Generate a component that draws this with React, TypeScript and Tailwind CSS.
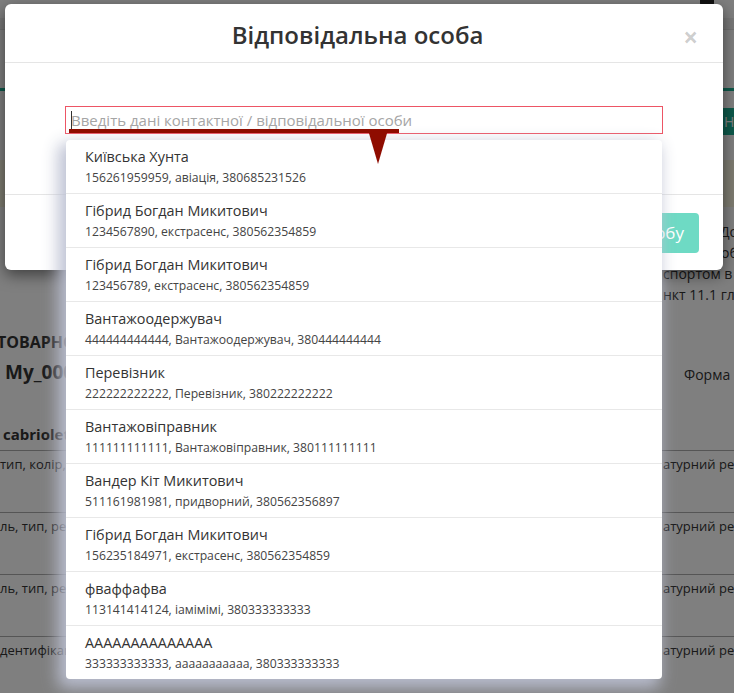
import React from "react";

const items = [
  { name: "Київська Хунта", detail: "156261959959, авіація, 380685231526" },
  { name: "Гібрид Богдан Микитович", detail: "1234567890, екстрасенс, 380562354859" },
  { name: "Гібрид Богдан Микитович", detail: "123456789, екстрасенс, 380562354859" },
  { name: "Вантажоодержувач", detail: "444444444444, Вантажоодержувач, 380444444444" },
  { name: "Перевізник", detail: "222222222222, Перевізник, 380222222222" },
  { name: "Вантажовіправник", detail: "111111111111, Вантажовіправник, 380111111111" },
  { name: "Вандер Кіт Микитович", detail: "511161981981, придворний, 380562356897" },
  { name: "Гібрид Богдан Микитович", detail: "156235184971, екстрасенс, 380562354859" },
  { name: "фваффафва", detail: "113141414124, іамімімі, 380333333333" },
  { name: "АААААААААААААА", detail: "333333333333, ааааааааааа, 380333333333" },
];

const rows = [
  { left: "тип, колір, реєстраційний номер", right: "атурний режим" },
  { left: "ль, тип, реєстраційний номер", right: "атурний режим" },
  { left: "ль, тип, реєстраційний номер", right: "атурний режим" },
  { left: "дентифікаційний номер", right: "атурний режим" },
];

export default function App() {
  return (
    <div className="relative w-[734px] h-[693px] overflow-hidden bg-white font-['Open_Sans',sans-serif] text-[#333]">
      {/* underlying page */}
      <div className="flex flex-col">
        <div className="h-[18px] bg-white flex justify-end pr-[20px]">
          <div className="w-[14px] h-[6px] bg-[#222] rounded-b-[3px]" />
        </div>
        <div className="h-[12px] bg-[#f0f0f0] border-b border-[#e0e0e0]" />
        <div className="h-[58px]" />
        <div className="h-[3px] bg-[#1ab394]" />
        <div className="h-[17px]" />
        <div className="h-[27px] flex pl-[718px]">
          <div className="shrink-0 bg-[#1ab394] text-white text-[14px] leading-[27px] px-[6px] whitespace-nowrap">
            Надрукувати
          </div>
        </div>
        <div className="h-[25px]" />
        <div className="h-[47px] bg-[#fcf8e3]" />
        <div className="h-[14px]" />
        <div className="grid grid-cols-[663px_71px] text-[14px] leading-[21px] text-[#333]">
          <div />
          <div className="whitespace-nowrap overflow-hidden">
            <div className="pl-[57px]">Договір</div>
            <div className="pl-[58px]">обов</div>
            <div>спортом в</div>
            <div>нкт 11.1 гл</div>
          </div>
        </div>
        <div className="h-[26px]" />
        <div className="whitespace-nowrap overflow-hidden font-bold text-[16px] leading-[22px] text-[#333] -ml-[3px]">
          ТОВАРНО-ТРАНСПОРТНА НАКЛАДНА
        </div>
        <div className="grid grid-cols-[684px_50px] h-[28px] mt-[5px]">
          <div className="pl-[5px] font-bold text-[19px] leading-[28px] whitespace-nowrap overflow-hidden">Му_0001</div>
          <div className="text-[14px] leading-[20px] pt-[7px] whitespace-nowrap overflow-hidden">Форма</div>
        </div>
        <div className="h-[37px]" />
        <div className="pl-[3px] font-bold text-[15px] leading-[22px] whitespace-nowrap overflow-hidden">cabriolet</div>
        <div className="h-[5px]" />
        {rows.map((r, i) => (
          <div
            key={i}
            className="grid grid-cols-[663px_71px] border-t border-[#aaa] h-[62px] text-[13px] leading-[18px] pt-[4px] whitespace-nowrap"
          >
            <div className="overflow-hidden">{r.left}</div>
            <div className="overflow-hidden">{r.right}</div>
          </div>
        ))}
      </div>

      {/* overlay */}
      <div className="absolute inset-0 bg-black/50" />

      {/* modal */}
      <div className="absolute left-[5px] top-[4px] w-[718px] rounded-[6px] bg-white shadow-[0_5px_15px_rgba(0,0,0,0.5)]">
        <div className="h-[59px] border-b border-[#e5e5e5] flex items-center pl-[27px] pr-[25px]">
          <div className="flex-1 text-center text-[24px] font-semibold leading-[30px] text-[#333] mt-[3px]">
            Відповідальна особа
          </div>
          <div className="text-[26px] font-bold leading-none text-black/20 mt-[8px]">×</div>
        </div>
        <div className="px-[60px] pt-[43px] pb-[60px]">
          <div className="relative">
            <input
              className="block w-full h-[28px] border border-[#ed5565] pl-[5px] text-[15px] outline-none placeholder:text-[#a5a5a5] bg-white"
              placeholder="Введіть дані контактної / відповідальної особи"
              readOnly
            />
            <div className="absolute left-[6px] top-[5px] w-px h-[20px] bg-[#333]" />
            {/* dropdown */}
            <div className="absolute left-[1px] right-[1px] top-[34px] z-10 bg-white rounded-[4px] shadow-[-5px_6px_16px_3px_rgba(188,192,210,0.95)]">
              {items.map((it, i) => (
                <div
                  key={i}
                  className={
                    "pl-[19px] pt-[7px] pb-[6px] " + (i < items.length - 1 ? "border-b border-[#e8e8e8]" : "")
                  }
                >
                  <div className="text-[14.4px] leading-[20px] text-[#333]">{it.name}</div>
                  <div className="text-[12.2px] leading-[18px] mt-[2px] text-[#444]">{it.detail}</div>
                </div>
              ))}
            </div>
            {/* annotation */}
            <div className="absolute left-[4px] top-[23px] w-[330px] h-[4px] bg-[#8f0c00] z-20" />
            <svg className="absolute left-[303px] top-[24px] z-20" width="20" height="34" viewBox="0 0 20 34">
              <polygon points="0,0 20,0 10,34" fill="#8f0c00" />
            </svg>
          </div>
        </div>
        <div className="border-t border-[#e5e5e5] h-[76px] flex justify-end items-start pt-[18px] pr-[24px]">
          <div className="h-[40px] rounded-[4px] bg-[#6edac4] text-white text-[17px] leading-[40px] px-[15px] whitespace-nowrap">
            Додати особу
          </div>
        </div>
      </div>
    </div>
  );
}
